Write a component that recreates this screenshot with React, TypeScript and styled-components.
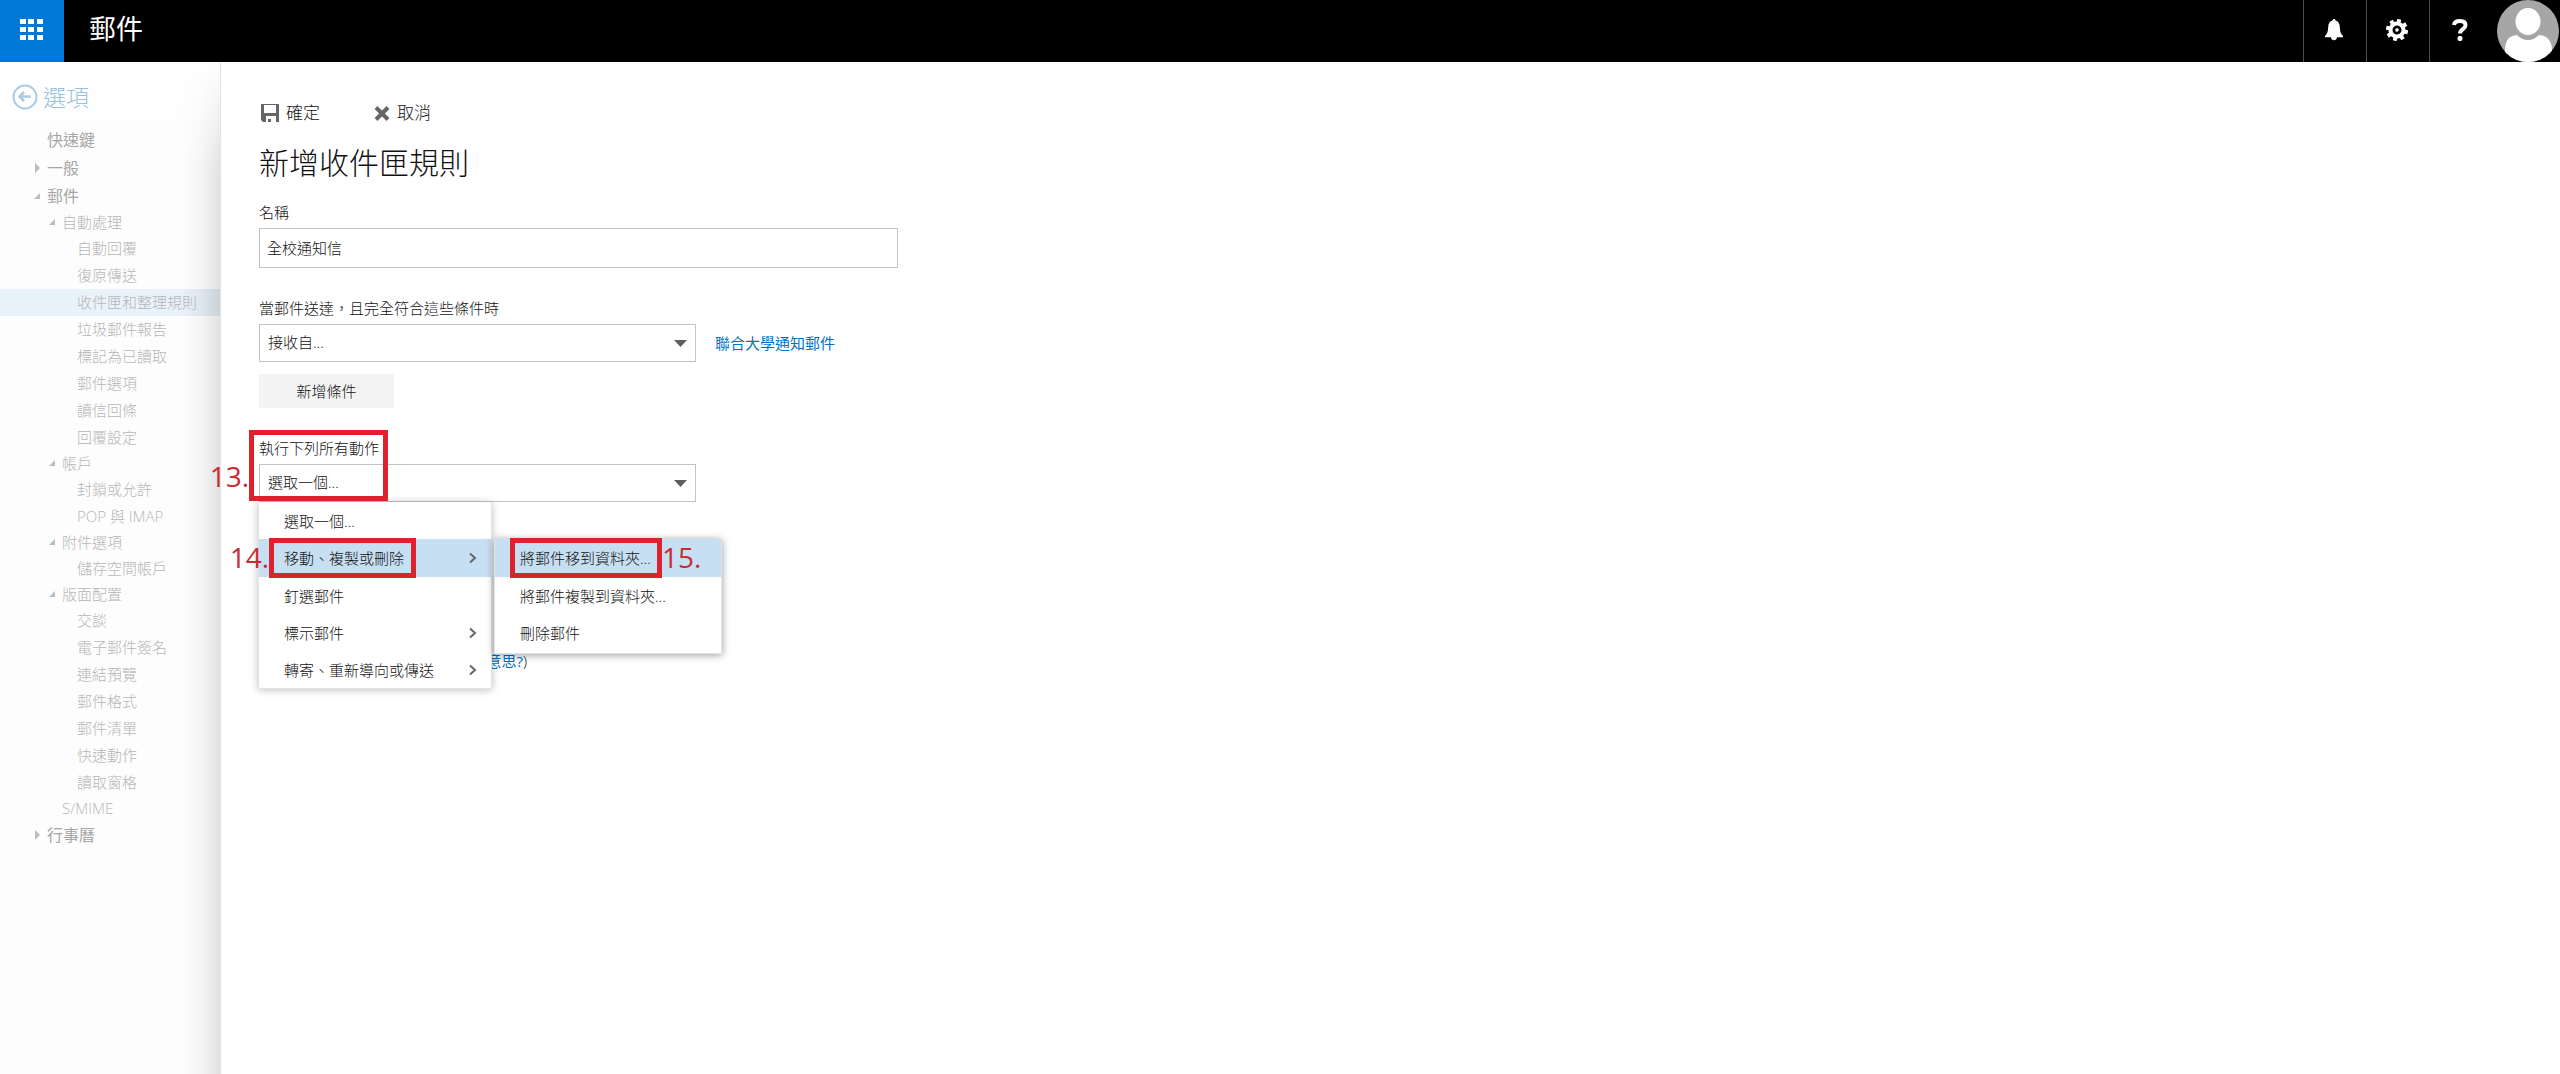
import React from "react";
import styled, { createGlobalStyle, css } from "styled-components";

const Global = createGlobalStyle`
  *, *::before, *::after { box-sizing: border-box; }
  body {
    margin: 0;
    background: #fff;
    color: #111;
    font-family: "Open Sans", "Noto Sans CJK TC", sans-serif;
    font-size: 15px;
    font-weight: 300;
    line-height: 20px;
  }
  button, input, select { font: inherit; color: inherit; }
  button { border: 0; padding: 0; background: none; cursor: pointer; }
  a { text-decoration: none; }
  ul { list-style: none; margin: 0; padding: 0; }
`;

const Page = styled.div`
  display: flex;
  flex-direction: column;
  min-height: 100vh;
`;

const TopBar = styled.header`
  display: flex;
  align-items: stretch;
  height: 62px;
  background: #000;
  color: #fff;
`;

const Launcher = styled.button`
  display: grid;
  place-items: center;
  width: 64px;
  padding: 0 1px 3px 0;
  background: #0078d7;
`;

const AppName = styled.div`
  flex: 1;
  padding-left: 25px;
  font-size: 27px;
  font-weight: 400;
  line-height: 58px;
`;

const BarButton = styled.button`
  display: grid;
  place-items: center;
  width: 63px;
  padding: 0 3px 3px 0;
  border-left: 1px solid #4d4d4d;
`;

const Avatar = styled.button`
  width: 62px;
  height: 62px;
  margin: 0 1px 0 5px;
`;

const Body = styled.div`
  flex: 1;
  display: flex;
`;

const Sidebar = styled.nav`
  width: 221px;
  padding-top: 18px;
  border-right: 1px solid #e2e2e2;
  background:
    linear-gradient(to bottom, #fff, rgba(255, 255, 255, 0) 110px),
    linear-gradient(to right, rgba(0, 0, 0, 0) 180px, rgba(0, 0, 0, 0.03) 200px, rgba(0, 0, 0, 0.11) 220px),
    #fdfdfd;
`;

const Back = styled.a`
  display: flex;
  align-items: center;
  gap: 5px;
  height: 34px;
  padding-left: 12px;
  margin-bottom: 12px;
  color: #97c2e3;
  font-size: 23px;
`;

const rowHeights = [28, 25, 27];

const NavRow = styled.a<{ $level: number; $selected?: boolean }>`
  display: flex;
  align-items: center;
  height: ${(p) => rowHeights[p.$level]}px;
  padding-left: ${(p) => 33 + p.$level * 15}px;
  padding-bottom: ${(p) => (p.$level === 0 ? 0 : 2)}px;
  color: ${(p) => (p.$level === 0 ? "#a6a6a6" : "#b6b6b6")};
  ${(p) =>
    p.$level === 0 &&
    css`
      font-size: 16px;
      font-weight: 400;
    `}
  ${(p) =>
    p.$selected &&
    css`
      background: linear-gradient(to right, rgba(0, 120, 215, 0.08) 180px, rgba(60, 110, 160, 0.14));
    `}
`;

const Marker = styled.svg`
  flex: none;
  width: 8px;
  height: 10px;
  margin-right: 6px;
  fill: #bcbcbc;
`;

const Content = styled.main`
  flex: 1;
  padding: 40px 38px;
`;

const Toolbar = styled.div`
  display: flex;
  gap: 54px;
  height: 22px;
`;

const ToolButton = styled.button`
  display: flex;
  align-items: center;
  gap: 7px;
  font-size: 17px;
`;

const Title = styled.h1`
  margin: 17px 0;
  font-size: 30px;
  font-weight: 300;
  line-height: 44px;
`;

const Field = styled.div`
  position: relative;
  display: flex;
  flex-direction: column;
  align-items: flex-start;
  gap: 6px;
  margin-bottom: 30px;
`;

const Label = styled.label`
  line-height: 20px;
`;

const TextBox = styled.input`
  width: 639px;
  height: 40px;
  padding: 0 7px 2px;
  border: 1px solid #c3c3c3;
  background: #fff;
`;

const FieldRow = styled.div`
  display: flex;
  align-items: center;
  gap: 19px;
`;

const SelectWrap = styled.div`
  position: relative;
  display: flex;
`;

const Select = styled.select`
  appearance: none;
  width: 437px;
  height: 38px;
  padding: 0 8px 2px;
  border: 1px solid #c3c3c3;
  border-radius: 0;
  background: #fff;
`;

const Arrow = styled.svg`
  position: absolute;
  right: 9px;
  top: 16px;
  width: 13px;
  height: 7px;
  fill: #5e5e5e;
  pointer-events: none;
`;

const Link = styled.a`
  color: #0072c6;
  font-weight: 400;
`;

const AddButton = styled.button`
  width: 135px;
  height: 34px;
  margin-top: 6px;
  background: #f3f3f3;
`;

const Note = styled.p`
  margin: 149px 0 0;
  width: 268px;
  text-align: right;
`;

const Menu = styled.ul`
  position: absolute;
  top: 100%;
  left: -1px;
  z-index: 1;
  width: 234px;
  border: 1px solid #e3e3e3;
  border-top: 0;
  background: #fff;
  box-shadow: 0 1px 8px rgba(0, 0, 0, 0.25);
`;

const SubMenu = styled(Menu)`
  top: 0;
  left: 235px;
  width: 228px;
  padding-bottom: 2px;
  box-shadow: 0 1px 8px rgba(0, 0, 0, 0.4);
`;

const MenuItem = styled.li<{ $active?: boolean }>`
  position: relative;
  height: ${(p) => (p.$active ? 38 : 37)}px;
  background: ${(p) => (p.$active ? "#c7dff2" : "transparent")};
`;

const MenuButton = styled.button`
  display: flex;
  align-items: center;
  justify-content: space-between;
  width: 100%;
  height: 100%;
  padding: 0 14px 0 25px;
  text-align: left;
`;

const Callout = styled.span<{ $x: number; $y: number; $w: number; $h: number }>`
  position: absolute;
  left: ${(p) => p.$x}px;
  top: ${(p) => p.$y}px;
  width: ${(p) => p.$w}px;
  height: ${(p) => p.$h}px;
  z-index: 2;
  border: 5px solid #dc222c;
  pointer-events: none;
`;

const Step = styled.span<{ $side: "left" | "right"; $low?: boolean }>`
  position: absolute;
  ${(p) => (p.$side === "left" ? "right" : "left")}: 100%;
  bottom: ${(p) => (p.$low ? 4 : 0)}px;
  margin: 0 5px;
  color: #cb2a33;
  font-size: 28px;
  font-weight: 400;
  line-height: 32px;
`;

type NavEntry = { text: string; level: number; state?: "open" | "closed"; selected?: boolean };

const nav: NavEntry[] = [
  { text: "快速鍵", level: 0 },
  { text: "一般", level: 0, state: "closed" },
  { text: "郵件", level: 0, state: "open" },
  { text: "自動處理", level: 1, state: "open" },
  { text: "自動回覆", level: 2 },
  { text: "復原傳送", level: 2 },
  { text: "收件匣和整理規則", level: 2, selected: true },
  { text: "垃圾郵件報告", level: 2 },
  { text: "標記為已讀取", level: 2 },
  { text: "郵件選項", level: 2 },
  { text: "讀信回條", level: 2 },
  { text: "回覆設定", level: 2 },
  { text: "帳戶", level: 1, state: "open" },
  { text: "封鎖或允許", level: 2 },
  { text: "POP 與 IMAP", level: 2 },
  { text: "附件選項", level: 1, state: "open" },
  { text: "儲存空間帳戶", level: 2 },
  { text: "版面配置", level: 1, state: "open" },
  { text: "交談", level: 2 },
  { text: "電子郵件簽名", level: 2 },
  { text: "連結預覽", level: 2 },
  { text: "郵件格式", level: 2 },
  { text: "郵件清單", level: 2 },
  { text: "快速動作", level: 2 },
  { text: "讀取窗格", level: 2 },
  { text: "S/MIME", level: 1 },
  { text: "行事曆", level: 0, state: "closed" },
];

const Chevron = () => (
  <svg width="9" height="12" viewBox="0 0 9 12" fill="none" stroke="#666" strokeWidth="2" aria-hidden="true">
    <path d="M2 1.500 7 6 2 10.500" />
  </svg>
);

const DropArrow = () => (
  <Arrow viewBox="0 0 13 7" aria-hidden="true">
    <path d="M0 0h13L6.500 7z" />
  </Arrow>
);

const teeth = [0, 45, 90, 135, 180, 225, 270, 315];

export default function App() {
  return (
    <Page>
      <Global />
      <TopBar>
        <Launcher aria-label="應用程式啟動器">
          <svg width="23" height="22" viewBox="0 0 23 22" fill="#fff">
            {[0, 8, 16].map((y) => [0, 8, 17].map((x) => <rect key={`${x}-${y}`} x={x} y={y} width="6" height="5" />))}
          </svg>
        </Launcher>
        <AppName>郵件</AppName>
        <BarButton aria-label="通知">
          <svg width="18" height="22" viewBox="0 0 18 22" fill="#fff">
            <path d="M9 0c1 0 1.500.6 1.500 1.600C13.400 2.400 14.600 4.700 14.800 8c.2 4.400.9 7 3.200 9v1.300h-6c-.2 1.800-1.300 2.900-3 2.900s-2.800-1.100-3-2.900H0V17c2.300-2 3-4.600 3.200-9C3.400 4.700 4.600 2.400 7.500 1.600 7.500.6 8 0 9 0z" />
          </svg>
        </BarButton>
        <BarButton aria-label="設定">
          <svg width="22" height="22" viewBox="-11 -11 22 22">
            <g transform="rotate(12)">
              {teeth.map((a) => (
                <rect key={a} x="-2" y="-11" width="4" height="5" fill="#fff" transform={`rotate(${a})`} />
              ))}
              <circle r="6.500" fill="none" stroke="#fff" strokeWidth="4" />
              <circle r="1.800" fill="#fff" />
            </g>
          </svg>
        </BarButton>
        <BarButton aria-label="說明">
          <svg width="16" height="22" viewBox="0 0 16 22">
            <path d="M2 6C2.300 3.200 4.500 2 8 2c3.600 0 5.500 1.400 5.500 4.200 0 3.800-5.500 4-5.500 8.300" fill="none" stroke="#fff" strokeWidth="4" />
            <rect x="5.500" y="17" width="5" height="5" rx="2" fill="#fff" />
          </svg>
        </BarButton>
        <Avatar aria-label="我的帳戶">
          <svg width="62" height="62" viewBox="0 0 62 62">
            <clipPath id="face">
              <circle cx="31" cy="31" r="31" />
            </clipPath>
            <g clipPath="url(#face)">
              <rect width="62" height="62" fill="#a6a6a6" />
              <ellipse cx="31" cy="21.500" rx="12.500" ry="13.500" fill="#fff" />
              <path d="M8 62V50c0-9 4-14.500 12-15 3 3 6.500 5 11 5s8-2 11-5c8 .5 13 6 13 15v12z" fill="#fff" />
            </g>
          </svg>
        </Avatar>
      </TopBar>
      <Body>
        <Sidebar>
          <Back href="#options">
            <svg width="26" height="26" viewBox="0 0 26 26" fill="none" stroke="#a9cbe6" strokeWidth="2">
              <circle cx="13" cy="13" r="11.500" />
              <path d="M19 12.500H8M12 8l-4.500 4.500L12 17" strokeWidth="2.500" />
            </svg>
            選項
          </Back>
          {nav.map((n) => (
            <NavRow key={n.text} href="#nav" $level={n.level} $selected={n.selected}>
              <Marker viewBox="0 0 8 10" aria-hidden="true">
                {n.state === "open" && <path d="M7 2v6H1z" />}
                {n.state === "closed" && <path d="M2 0l5 5-5 5z" />}
              </Marker>
              {n.text}
            </NavRow>
          ))}
        </Sidebar>
        <Content>
          <Toolbar>
            <ToolButton>
              <svg width="20" height="18" viewBox="0 0 20 18" fill="#666">
                <path fillRule="evenodd" d="M2 0h18v18h-3v-6H7v6H4l-2-2zM5 1v8h12V1zM9 15h3v3H9z" />
              </svg>
              確定
            </ToolButton>
            <ToolButton>
              <svg width="16" height="15" viewBox="0 0 16 15" stroke="#666" strokeWidth="4">
                <path d="M2 1.500 14 13.500M14 1.500 2 13.500" />
              </svg>
              取消
            </ToolButton>
          </Toolbar>
          <Title>新增收件匣規則</Title>
          <Field>
            <Label htmlFor="name">名稱</Label>
            <TextBox id="name" defaultValue="全校通知信" />
          </Field>
          <Field>
            <Label htmlFor="condition">當郵件送達，且完全符合這些條件時</Label>
            <FieldRow>
              <SelectWrap>
                <Select id="condition">
                  <option>接收自...</option>
                </Select>
                <DropArrow />
              </SelectWrap>
              <Link href="#people">聯合大學通知郵件</Link>
            </FieldRow>
            <AddButton>新增條件</AddButton>
          </Field>
          <Field>
            <Label htmlFor="action">執行下列所有動作</Label>
            <SelectWrap>
              <Select id="action">
                <option>選取一個...</option>
              </Select>
              <DropArrow />
            </SelectWrap>
            <Callout $x={-10} $y={-8} $w={139} $h={71}>
              <Step $side="left" $low>13.</Step>
            </Callout>
            <Menu>
              <MenuItem>
                <MenuButton>選取一個...</MenuButton>
              </MenuItem>
              <MenuItem $active>
                <MenuButton>
                  移動、複製或刪除
                  <Chevron />
                </MenuButton>
                <Callout $x={10} $y={-1} $w={147} $h={40}>
                  <Step $side="left">14.</Step>
                </Callout>
                <SubMenu>
                  <MenuItem $active>
                    <MenuButton>將郵件移到資料夾...</MenuButton>
                    <Callout $x={15} $y={-1} $w={152} $h={40}>
                      <Step $side="right">15.</Step>
                    </Callout>
                  </MenuItem>
                  <MenuItem>
                    <MenuButton>將郵件複製到資料夾...</MenuButton>
                  </MenuItem>
                  <MenuItem>
                    <MenuButton>刪除郵件</MenuButton>
                  </MenuItem>
                </SubMenu>
              </MenuItem>
              <MenuItem>
                <MenuButton>釘選郵件</MenuButton>
              </MenuItem>
              <MenuItem>
                <MenuButton>
                  標示郵件
                  <Chevron />
                </MenuButton>
              </MenuItem>
              <MenuItem>
                <MenuButton>
                  轉寄、重新導向或傳送
                  <Chevron />
                </MenuButton>
              </MenuItem>
            </Menu>
          </Field>
          <Note>
            (<Link href="#help">這是什麼意思?</Link>)
          </Note>
        </Content>
      </Body>
    </Page>
  );
}
